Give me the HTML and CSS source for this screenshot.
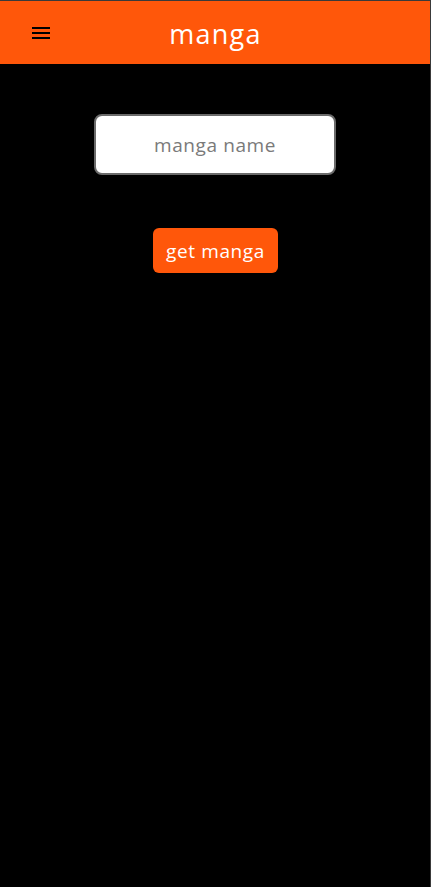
FILE: index.html
```html
<!DOCTYPE html>
<html>
<head>
<meta charset="utf-8">
<link rel="stylesheet" href="styles.css">
</head>
<body>
<div class="frame">
  <header class="topbar">
    <div class="left">
      <button class="menu" aria-label="menu">
        <svg width="24" height="24" viewBox="0 0 24 24"><path d="M3 6h18v2H3zM3 11h18v2H3zM3 16h18v2H3z" fill="#000"/></svg>
      </button>
    </div>
    <h1 class="title">manga</h1>
    <div></div>
  </header>
  <main class="content">
    <input class="search" type="text" placeholder="manga name">
    <button class="get">get manga</button>
  </main>
</div>
</body>
</html>
```
FILE: styles.css
```css
html, body {
  margin: 0;
  padding: 0;
  background: #000;
  height: 100%;
}
.frame {
  box-sizing: border-box;
  height: 887px;
  border-top: 1px solid #3a3a3a;
  border-right: 1px solid #3a3a3a;
  background: #000;
}
.topbar {
  height: 63px;
  background: #ff570a;
  display: grid;
  grid-template-columns: 1fr auto 1fr;
  align-items: center;
}
.left {
  display: flex;
  align-items: center;
  padding-left: 29px;
}
.menu {
  width: 24px;
  height: 24px;
  padding: 0;
  border: none;
  background: none;
  display: flex;
}
.title {
  margin: 0 0 0 1px;
  font-family: "Open Sans", "Liberation Sans", sans-serif;
  font-weight: 400;
  font-size: 27px;
  color: #fff;
  letter-spacing: 1.3px;
  line-height: 1;
  padding-top: 2px;
}
.content {
  display: flex;
  flex-direction: column;
  align-items: center;
  padding-top: 50px;
}
.search {
  box-sizing: border-box;
  width: 242px;
  height: 61px;
  border: 2px solid #6b6b6b;
  border-radius: 8px;
  background: #fff;
  text-align: center;
  font-family: "Open Sans", "Liberation Sans", sans-serif;
  font-size: 19px;
  letter-spacing: 0.6px;
  outline: none;
}
.search::placeholder {
  color: #7a7a7a;
}
.get {
  margin-top: 53px;
  margin-left: 1px;
  width: 125px;
  height: 45px;
  border: none;
  border-radius: 6px;
  background: #ff570a;
  color: #fff;
  font-family: "Open Sans", "Liberation Sans", sans-serif;
  font-size: 19px;
  letter-spacing: 0.6px;
  padding: 0;
}
```
